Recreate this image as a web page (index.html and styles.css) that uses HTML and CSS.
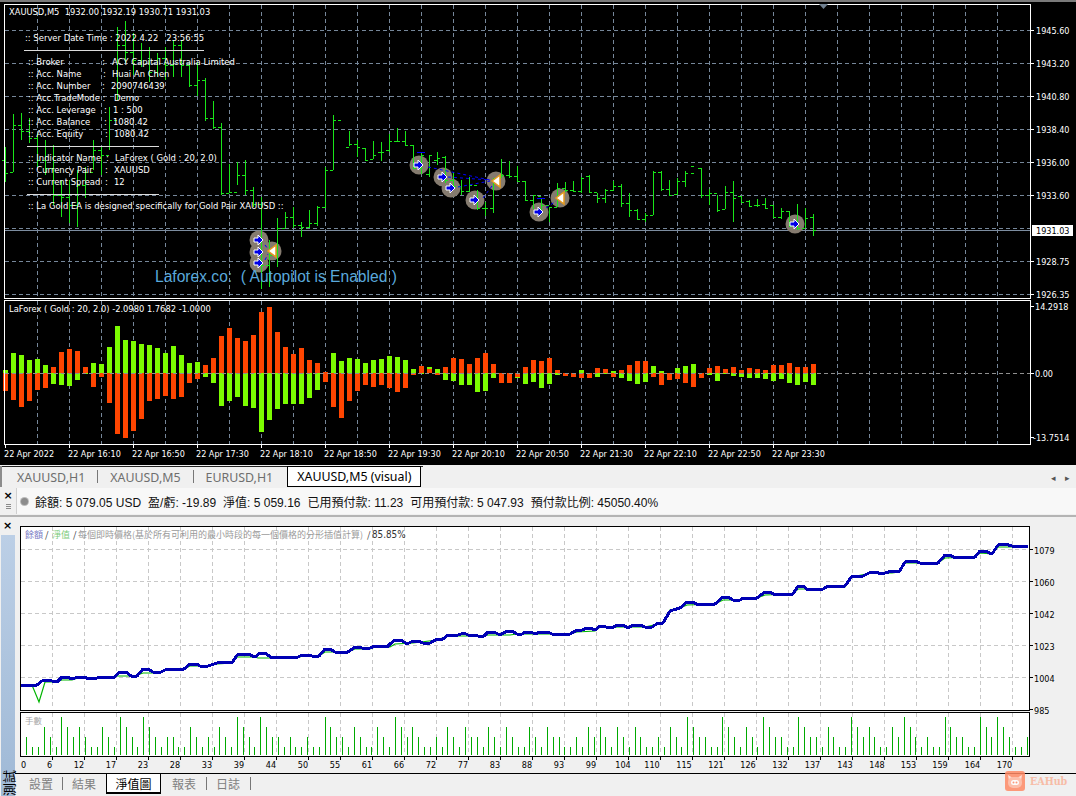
FILE: index.html
```html
<!DOCTYPE html>
<html lang="zh-Hant">
<head>
<meta charset="utf-8">
<title>MetaTrader strategy tester</title>
<link rel="stylesheet" href="styles.css">
</head>
<body>
<div class="app">
  <div class="chart-window">
    <svg class="chart-svg" width="1076" height="465" viewBox="0 0 1076 465">
      <defs>
        <g id="buy">
          <path class="arrow-blue" d="M-5-2h4v-3l5 5-5 5v-3h-4z"/>
        </g>
        <g id="sell">
          <path class="arrow-sell" d="M4-6L-4 0 4 6z"/>
        </g>
      </defs>
      <!-- grid -->
      <path class="grid-dark" d="M37 5V298M69 5V298M101 5V298M133 5V298M165 5V298M197 5V298M229 5V298M261 5V298M293 5V298M325 5V298M357 5V298M389 5V298M421 5V298M453 5V298M485 5V298M517 5V298M549 5V298M581 5V298M613 5V298M645 5V298M677 5V298M709 5V298M741 5V298M773 5V298M805 5V298M837 5V298M869 5V298M901 5V298M933 5V298M965 5V298M997 5V298"/>
      <path class="grid-dark" d="M5 30H1030M5 63H1030M5 96H1030M5 129H1030M5 162H1030M5 195H1030M5 228H1030M5 261H1030M5 294H1030"/>
      <path class="grid-dark" d="M37 301V444M69 301V444M101 301V444M133 301V444M165 301V444M197 301V444M229 301V444M261 301V444M293 301V444M325 301V444M357 301V444M389 301V444M421 301V444M453 301V444M485 301V444M517 301V444M549 301V444M581 301V444M613 301V444M645 301V444M677 301V444M709 301V444M741 301V444M773 301V444M805 301V444M837 301V444M869 301V444M901 301V444M933 301V444M965 301V444M997 301V444"/>
      <path class="price-line" d="M5 230H1030"/>

      <!-- trade circles -->
      <g class="trade-discs">
        <circle cx="259" cy="240" r="9.5"/><circle cx="259" cy="252" r="9.5"/><circle cx="259" cy="263" r="9.5"/><circle cx="272" cy="251" r="9.5"/>
        <circle cx="419" cy="165" r="9.5"/><circle cx="443" cy="177" r="9.5"/><circle cx="451" cy="188" r="9.5"/><circle cx="475" cy="200" r="9.5"/><circle cx="496" cy="181" r="9.5"/>
        <circle cx="539" cy="212" r="9.5"/><circle cx="560" cy="198" r="9.5"/><circle cx="795" cy="224" r="9.5"/>
      </g>

      <!-- price bars -->
      <path class="bars" d="M5 147V182M2 160h3M5 173h3M13 114V172M10 172h3M13 125h3M21 113V140M18 125h3M21 131h3M29 118V143M26 131h3M29 138h3M37 133V167M34 138h3M37 160h3M45 140V175M42 160h3M45 168h3M53 145V205M50 168h3M53 195h3M61 180V217M58 195h3M61 197h3M69 180V223M66 197h3M69 205h3M77 170V227M74 205h3M77 185h3M85 167V198M82 185h3M85 172h3M93 140V170M90 172h3M93 150h3M101 147V175M98 150h3M101 155h3M109 107V150M106 155h3M109 120h3M117 27V100M114 120h3M117 45h3M125 21V63M122 45h3M125 52h3M133 33V75M130 52h3M133 60h3M141 43V67M138 60h3M141 50h3M149 47V82M146 50h3M149 72h3M157 53V77M154 72h3M157 58h3M165 47V80M162 58h3M165 65h3M173 40V77M170 65h3M173 45h3M181 40V77M178 45h3M181 65h3M189 63V87M186 65h3M189 85h3M197 62V96M194 85h3M197 80h3M205 78V121M202 80h3M205 118h3M213 101V129M210 118h3M213 127h3M221 123V195M218 127h3M221 193h3M229 164V193M226 193h3M229 192h3M237 162V185M234 192h3M237 175h3M245 160V195M242 175h3M245 190h3M253 187V207M250 190h3M253 204h3M261 197V289M258 204h3M261 265h3M269 240V287M266 265h3M269 255h3M277 218V267M274 255h3M277 228h3M285 212V228M282 228h3M285 217h3M293 207V228M290 217h3M293 225h3M301 222V237M298 225h3M301 227h3M309 210V228M306 227h3M309 223h3M317 206V226M314 223h3M317 207h3M325 167V208M322 207h3M325 170h3M333 115V170M330 170h3M333 120h3M338 120h3M349 131V146M346 147h3M349 144h3M357 140V157M354 144h3M357 147h3M365 148V160M362 148h3M365 160h3M373 141V159M370 159h3M373 155h3M381 142V161M378 152h3M381 152h3M389 134V152M386 150h3M389 141h3M397 128V142M394 141h3M397 141h3M405 131V146M402 141h3M405 145h3M413 145V168M410 145h3M413 168h3M421 153V174M418 168h3M421 155h3M429 155V177M426 174h3M429 155h3M437 152V165M434 160h3M437 158h3M445 156V183M442 157h3M445 180h3M453 172V188M450 180h3M453 186h3M461 180V195M458 186h3M461 191h3M469 177V192M466 191h3M469 185h3M477 190V210M474 185h3M477 208h3M485 202V216M482 208h3M485 208h3M493 180V213M490 208h3M493 178h3M501 159V178M498 178h3M501 175h3M509 161V178M506 175h3M509 176h3M517 166V182M514 176h3M517 181h3M525 181V200M522 181h3M525 200h3M533 195V209M530 200h3M533 195h3M541 198V213M538 196h3M541 205h3M549 207V222M546 205h3M549 207h3M557 183V207M554 207h3M557 188h3M565 182V192M562 188h3M565 190h3M573 181V192M570 190h3M573 191h3M581 177V193M578 191h3M581 178h3M589 175V193M586 176h3M589 192h3M597 193V203M594 192h3M597 198h3M605 189V203M602 198h3M605 190h3M613 181V191M610 190h3M613 186h3M621 184V207M618 186h3M621 203h3M629 193V217M626 203h3M629 210h3M637 209V220M634 210h3M637 219h3M645 213V222M642 219h3M645 215h3M653 171V215M650 215h3M653 172h3M661 171V191M658 172h3M661 189h3M669 180V195M666 189h3M669 195h3M677 178V195M674 194h3M677 181h3M685 171V187M682 181h3M685 173h3M691 166h3M691 173h3M701 168V198M698 168h3M701 195h3M709 189V205M706 195h3M709 193h3M717 195V212M714 193h3M717 210h3M725 186V209M722 209h3M725 192h3M733 181V222M730 192h3M733 198h3M741 196V203M738 196h3M741 202h3M749 200V207M746 201h3M749 206h3M757 199V207M754 205h3M757 205h3M765 198V209M762 204h3M765 208h3M773 205V217M770 205h3M773 217h3M781 208V219M778 217h3M781 211h3M789 211V227M786 211h3M789 226h3M797 204V230M794 226h3M797 228h3M805 208V228M802 228h3M805 218h3M813 214V236M810 217h3M813 230h3"/>

      <!-- trade links -->
      <path class="trade-link" d="M428 167L490 180M448 177L490 180M458 187L490 181M483 198L492 186M546 208L556 201M265 245L268 249M265 260L268 254"/>
      <path class="trade-mark" d="M417 152h8M537 198h8"/>
      <!-- trade arrows -->
      <use href="#buy" x="259" y="240"/><use href="#buy" x="259" y="252"/><use href="#buy" x="259" y="263"/><use href="#sell" x="272" y="251"/>
      <use href="#buy" x="419" y="165"/><use href="#buy" x="443" y="177"/><use href="#buy" x="451" y="188"/><use href="#buy" x="475" y="200"/><use href="#sell" x="496" y="181"/>
      <use href="#buy" x="539" y="212"/><use href="#sell" x="560" y="198"/><use href="#buy" x="795" y="224"/>

      <!-- oscillator histogram -->
      <g transform="translate(.5 0)">
        <path class="hist-green" d="M5 373V370M13 373V353M21 373V355M29 373V360M37 373V359M45 373V365M53 373V384M61 373V385M69 373V386M77 373V380M85 373V374M93 373V363M101 373V364M109 373V347M117 373V326M125 373V340M133 373V341M141 373V344M149 373V345M157 373V348M165 373V353M173 373V346M181 373V355M189 373V363M197 373V362M205 373V377M213 373V383M221 373V406M229 373V401M237 373V397M245 373V406M253 373V408M261 373V432M269 373V420M277 373V409M285 373V404M293 373V404M301 373V404M309 373V398M317 373V390M333 373V353M341 373V361M349 373V358M357 373V359M365 373V363M373 373V360M381 373V359M389 373V356M397 373V357M405 373V360M413 373V369M421 373V374M429 373V367M437 373V369M445 373V380M453 373V381M461 373V385M469 373V385M477 373V392M485 373V391M493 373V378M517 373V378M525 373V384M533 373V382M541 373V388M549 373V384M557 373V375M581 373V370M597 373V377M605 373V374M613 373V371M621 373V378M629 373V381M637 373V384M645 373V382M653 373V366M661 373V371M677 373V368M685 373V366M693 373V364M709 373V375M717 373V381M725 373V374M733 373V376M741 373V377M749 373V378M757 373V378M765 373V379M773 373V381M781 373V379M789 373V383M797 373V385M805 373V382M813 373V385"/>
        <path class="hist-red" d="M5 373V391M13 373V400M21 373V407M29 373V401M37 373V390M45 373V388M53 373V367M61 373V352M69 373V349M77 373V351M85 373V367M93 373V387M101 373V377M109 373V403M117 373V434M125 373V438M133 373V431M141 373V419M149 373V401M157 373V399M165 373V396M173 373V399M181 373V397M189 373V383M197 373V379M205 373V365M213 373V358M221 373V336M229 373V328M237 373V338M245 373V341M253 373V335M261 373V312M269 373V307M277 373V332M285 373V347M293 373V354M301 373V348M309 373V360M317 373V363M325 372V382M333 373V407M341 373V418M349 373V401M357 373V391M365 373V385M373 373V387M381 373V385M389 373V388M397 373V392M405 373V388M413 373V375M421 373V366M429 373V369M437 373V375M445 373V367M453 373V358M461 373V359M469 373V364M477 373V358M485 373V353M493 373V364M501 373V383M509 373V383M517 373V377M525 373V367M533 373V360M541 373V361M549 373V358M557 373V370M565 373V376M573 373V377M581 373V378M589 373V378M597 373V368M605 373V369M613 373V377M621 373V370M629 373V365M637 373V361M645 373V361M653 373V377M661 373V385M669 373V380M677 373V379M685 373V383M693 373V387M701 373V378M709 373V368M717 373V366M725 373V369M733 373V367M741 373V370M749 373V368M757 373V369M765 373V370M773 373V365M781 373V365M789 373V363M797 373V367M805 373V367M813 373V364"/>
      </g>
      <path class="zero-line" d="M5 373H1030"/>

      <!-- frames -->
      <path class="frame" d="M4.5 4.5H1030.5V298.5H4.5ZM4.5 300.5H1030.5V444.5H4.5Z"/>
      <path class="frame" d="M1031 30h3M1031 63h3M1031 96h3M1031 129h3M1031 162h3M1031 195h3M1031 261h3M1031 294h3M1031 306h3M1031 373h3M1031 437h3"/>
      <path class="frame" d="M5 445v3M69 445v3M133 445v3M197 445v3M261 445v3M325 445v3M389 445v3M453 445v3M517 445v3M581 445v3M645 445v3M709 445v3M773 445v3"/>
      <path class="peg" d="M819 4h9l-4.500 5z"/>

      <!-- panel text -->
      <text class="h" x="9" y="15">XAUUSD,M5  1932.00 1932.19 1930.71 1931.03</text>
      <text class="p" x="25" y="41">:: Server Date Time : 2022.4.22   23:56:55</text>
      <path class="rule" d="M24 50H204M27 146H159M27 194H159"/>
      <text class="p" x="28" y="65">:: Broker</text><text class="p" x="102" y="65">:</text><text class="p" x="112" y="65">ACY Capital Australia Limited</text>
      <text class="p" x="28" y="77">:: Acc. Name</text><text class="p" x="103" y="77">:</text><text class="p" x="112" y="77">Huai An Chen</text>
      <text class="p" x="28" y="89">:: Acc. Number</text><text class="p" x="102" y="89">:</text><text class="p" x="111" y="89">2090746439</text>
      <text class="p" x="28" y="101">:: Acc.TradeMode :</text><text class="p" x="114" y="101">Demo</text>
      <text class="p" x="28" y="113">:: Acc. Leverage</text><text class="p" x="104" y="113">:</text><text class="p" x="113" y="113">1 : 500</text>
      <text class="p" x="28" y="125">:: Acc. Balance</text><text class="p" x="104" y="125">:</text><text class="p" x="113" y="125">1080.42</text>
      <text class="p" x="28" y="137">:: Acc. Equity</text><text class="p" x="105" y="137">:</text><text class="p" x="114" y="137">1080.42</text>
      <text class="p" x="28" y="161">:: Indicator Name</text><text class="p" x="106" y="161">:</text><text class="p" x="115" y="161">LaForex ( Gold : 20, 2.0)</text>
      <text class="p" x="28" y="173">:: Currency Pair</text><text class="p" x="105" y="173">:</text><text class="p" x="114" y="173">XAUUSD</text>
      <text class="p" x="28" y="185">:: Current Spread</text><text class="p" x="105" y="185">:</text><text class="p" x="114" y="185">12</text>
      <text class="p" x="28" y="209">:: La Gold EA is designed specifically for Gold Pair XAUUSD ::</text>
      <text class="autopilot" x="155" y="282">Laforex.co:  ( Autopilot is Enabled )</text>
      <text class="h" x="9" y="312">LaForex ( Gold : 20, 2.0) -2.0980 1.7682 -1.0000</text>

      <!-- price scale -->
      <text class="t" x="1036" y="34">1945.60</text><text class="t" x="1036" y="67">1943.20</text><text class="t" x="1036" y="100">1940.80</text><text class="t" x="1036" y="133">1938.40</text><text class="t" x="1036" y="166">1936.00</text><text class="t" x="1036" y="199">1933.60</text>
      <rect class="price-box" x="1032" y="225" width="41" height="11"/><text class="t-dark" x="1036" y="234">1931.03</text>
      <text class="t" x="1036" y="265">1928.75</text><text class="t" x="1036" y="298">1926.35</text>
      <text class="t" x="1035" y="310">14.2918</text><text class="t" x="1035" y="377">0.00</text><text class="t" x="1033" y="441">-13.7514</text>

      <!-- time scale -->
      <text class="t" x="4" y="457">22 Apr 2022</text><text class="t" x="68" y="457">22 Apr 16:10</text><text class="t" x="132" y="457">22 Apr 16:50</text><text class="t" x="196" y="457">22 Apr 17:30</text><text class="t" x="260" y="457">22 Apr 18:10</text><text class="t" x="324" y="457">22 Apr 18:50</text><text class="t" x="388" y="457">22 Apr 19:30</text><text class="t" x="452" y="457">22 Apr 20:10</text><text class="t" x="516" y="457">22 Apr 20:50</text><text class="t" x="580" y="457">22 Apr 21:30</text><text class="t" x="644" y="457">22 Apr 22:10</text><text class="t" x="708" y="457">22 Apr 22:50</text><text class="t" x="772" y="457">22 Apr 23:30</text>
    </svg>
  </div>

  <div class="tabbar">
    <div class="tab tab-a">XAUUSD,H1</div><i class="tab-sep"></i>
    <div class="tab tab-b">XAUUSD,M5</div><i class="tab-sep"></i>
    <div class="tab tab-c">EURUSD,H1</div>
    <div class="tab tab-active">XAUUSD,M5 (visual)</div>
    <div class="tab-scroll"><span>&#9666;</span><span>&#9656;</span></div>
  </div>

  <div class="status-row">
    <div class="grip"><b>&times;</b><i></i></div>
    <div class="status">
      <span class="dot"></span>
      <span>餘額: 5 079.05 USD</span>
      <span>盈/虧: -19.89</span>
      <span>淨值: 5 059.16</span>
      <span>已用預付款: 11.23</span>
      <span>可用預付款: 5 047.93</span>
      <span>預付款比例: 45050.40%</span>
    </div>
  </div>

  <div class="tester">
    <div class="side">
      <b class="side-close">&times;</b>
      <div class="side-tab"><span>測試</span></div>
    </div>
    <div class="tester-main">
      <svg class="equity-svg" width="1061" height="256" viewBox="15 517 1061 256">
        <rect class="paper" x="20" y="526" width="1009" height="184"/>
        <rect class="paper" x="20" y="712" width="1009" height="44"/>
        <path class="grid-light" d="M52 527V709M84 527V709M116 527V709M148 527V709M180 527V709M212 527V709M244 527V709M276 527V709M308 527V709M340 527V709M372 527V709M404 527V709M436 527V709M468 527V709M500 527V709M532 527V709M564 527V709M596 527V709M628 527V709M660 527V709M692 527V709M724 527V709M756 527V709M788 527V709M820 527V709M852 527V709M884 527V709M916 527V709M948 527V709M980 527V709M1012 527V709"/>
        <path class="grid-light" d="M52 713V755M84 713V755M116 713V755M148 713V755M180 713V755M212 713V755M244 713V755M276 713V755M308 713V755M340 713V755M372 713V755M404 713V755M436 713V755M468 713V755M500 713V755M532 713V755M564 713V755M596 713V755M628 713V755M660 713V755M692 713V755M724 713V755M756 713V755M788 713V755M820 713V755M852 713V755M884 713V755M916 713V755M948 713V755M980 713V755M1012 713V755"/>
        <path class="grid-light" d="M21 549H1029M21 581H1029M21 613H1029M21 645H1029M21 677H1029"/>

        <polyline class="eq-green" points="21,685 32,685 39,702 45,682 56,682 62,680 72,680 78,678 113,678 117,676 135,676 143,673 153,673 161,672 167,669 184,669 190,666 208,666 217,664 232,663 237,657 255,657 258,658 272,658 300,657 302,656 319,656 325,652 348,652 355,649 370,649 375,647 390,647 395,644 413,643 437,640 448,636 484,636 488,635 510,635 517,634 570,634 577,632 595,631 600,627 612,628 617,627 645,627 658,624 663,623 670,610 680,608 687,605 715,604 723,600 740,600 743,599 757,598 765,595 793,594 798,589 823,589 828,587 845,587 852,577 871,573 892,573 899,572 905,563 938,563 945,558 975,557 980,553 992,554 998,547 1028,547"/>
        <polyline class="eq-blue" points="21,685 37,685 42,681 45,680 52,681 57,682 62,677 67,677 72,679 78,677 83,677 90,679 97,678 100,677 113,678 120,672 126,672 131,676 137,676 143,669 148,669 153,672 161,672 167,669 184,669 190,664 197,664 200,666 208,666 217,663 222,662 232,663 237,655 243,654 248,654 255,657 260,653 265,653 272,658 298,657 302,655 310,655 312,656 319,656 325,649 330,649 335,652 348,652 355,647 360,647 364,649 370,648 375,646 380,646 387,647 390,644 395,640 401,640 407,644 413,641 418,641 423,643 430,643 437,639 443,639 448,635 458,635 464,633 468,635 475,635 478,636 484,636 488,632 494,632 500,635 507,631 512,631 517,634 522,634 525,632 531,632 535,634 540,632 548,632 552,634 570,634 577,630 582,630 587,628 590,628 595,630 600,626 612,628 617,625 623,625 628,628 633,625 640,625 645,627 652,627 658,623 663,623 670,611 680,608 687,602 693,602 698,605 715,604 723,597 728,597 733,600 740,600 743,598 757,598 765,592 770,592 775,595 793,594 798,586 804,586 807,590 823,589 828,586 845,586 852,576 863,576 871,572 875,572 882,574 892,571 899,572 905,562 915,561 920,563 938,563 945,555 950,555 955,558 975,557 980,551 985,551 992,554 998,545 1005,544 1012,546 1022,546 1028,547"/>

        <path class="volume" d="M26 737V755M32 747V755M38 747V755M44 727V755M50 737V755M56 747V755M61 717V755M67 727V755M73 737V755M79 727V755M85 737V755M91 747V755M97 747V755M102 727V755M108 737V755M114 747V755M120 717V755M126 727V755M132 737V755M137 747V755M143 717V755M149 727V755M155 737V755M161 747V755M167 737V755M173 737V755M178 747V755M184 747V755M190 727V755M196 737V755M202 747V755M208 737V755M214 747V755M219 727V755M225 737V755M231 747V755M237 717V755M243 727V755M249 737V755M254 747V755M260 717V755M266 727V755M272 737V755M278 737V755M284 747V755M290 737V755M295 747V755M301 747V755M307 737V755M313 747V755M319 747V755M325 717V755M330 727V755M336 737V755M342 737V755M348 747V755M354 727V755M360 737V755M366 747V755M371 747V755M377 727V755M383 737V755M389 747V755M395 717V755M401 727V755M407 737V755M412 727V755M418 737V755M424 747V755M430 747V755M436 737V755M442 747V755M447 727V755M453 737V755M459 747V755M465 727V755M471 737V755M477 737V755M483 747V755M488 727V755M494 737V755M500 747V755M506 727V755M512 737V755M518 747V755M524 747V755M529 727V755M535 737V755M541 747V755M547 727V755M553 737V755M559 737V755M564 747V755M570 747V755M576 737V755M582 747V755M588 727V755M594 737V755M600 727V755M605 737V755M611 747V755M617 727V755M623 737V755M629 747V755M635 727V755M640 737V755M646 747V755M652 747V755M658 737V755M664 747V755M670 727V755M676 737V755M681 747V755M687 717V755M693 727V755M699 737V755M705 737V755M711 747V755M717 747V755M722 717V755M728 727V755M734 737V755M740 747V755M746 727V755M752 737V755M757 747V755M763 717V755M769 727V755M775 737V755M781 737V755M787 747V755M793 747V755M798 717V755M804 727V755M810 737V755M816 737V755M822 747V755M828 727V755M833 737V755M839 747V755M845 747V755M851 717V755M857 727V755M863 737V755M869 727V755M874 737V755M880 747V755M886 747V755M892 727V755M898 737V755M904 717V755M910 727V755M915 737V755M921 747V755M927 737V755M933 747V755M939 747V755M945 717V755M950 727V755M956 737V755M962 737V755M968 747V755M974 747V755M980 717V755M986 727V755M991 737V755M997 717V755M1003 727V755M1009 737V755M1015 747V755M1021 747V755M1027 737V755"/>

        <path class="ink" d="M20.500 526.500H1029.500V710.500H20.500ZM20.500 712.500H1029.500V756.500H20.500Z"/>
        <path class="ink" d="M1030 549h3M1030 581h3M1030 613h3M1030 645h3M1030 677h3M1030 709h3M52 757v3M84 757v3M116 757v3M148 757v3M180 757v3M212 757v3M244 757v3M276 757v3M308 757v3M340 757v3M372 757v3M404 757v3M436 757v3M468 757v3M500 757v3M532 757v3M564 757v3M596 757v3M628 757v3M660 757v3M692 757v3M724 757v3M756 757v3M788 757v3M820 757v3M852 757v3M884 757v3M916 757v3M948 757v3M980 757v3M1012 757v3"/>

        <text class="legend" y="538"><tspan class="l-blue" x="25">餘額</tspan><tspan x="45">/</tspan><tspan class="l-green" x="52">淨值</tspan><tspan x="73">/</tspan><tspan class="l-gray" x="78">每個即時價格(基於所有可利用的最小時段的每一個價格的分形插值計算)</tspan><tspan x="367">/</tspan><tspan class="l-pct" x="372">85.85%</tspan></text>
        <text class="lots" x="25" y="724">手數</text>

        <text class="a" x="1034" y="554">1079</text><text class="a" x="1034" y="586">1060</text><text class="a" x="1034" y="618">1042</text><text class="a" x="1034" y="650">1023</text><text class="a" x="1034" y="682">1004</text><text class="a" x="1034" y="714">985</text>

        <g class="a-mid">
          <text x="23.500" y="768">0</text><text x="49.500" y="768">6</text><text x="79" y="768">12</text><text x="111" y="768">17</text><text x="143" y="768">23</text><text x="175" y="768">28</text><text x="207" y="768">33</text><text x="239" y="768">39</text><text x="271" y="768">44</text><text x="303" y="768">50</text><text x="335" y="768">55</text><text x="367" y="768">61</text><text x="399" y="768">66</text><text x="431" y="768">72</text><text x="463" y="768">77</text><text x="495" y="768">83</text><text x="527" y="768">88</text><text x="559" y="768">93</text><text x="591" y="768">99</text><text x="623" y="768">104</text><text x="652" y="768">110</text><text x="684" y="768">115</text><text x="716" y="768">121</text><text x="748" y="768">126</text><text x="780" y="768">132</text><text x="812.500" y="768">137</text><text x="845" y="768">143</text><text x="877" y="768">148</text><text x="908.500" y="768">153</text><text x="940" y="768">159</text><text x="972.500" y="768">164</text><text x="1004.500" y="768">170</text>
        </g>
      </svg>
      <div class="bottom-tabs">
        <div class="btab btab-first">設置</div><i class="btab-sep"></i>
        <div class="btab">結果</div>
        <div class="btab btab-active">淨值圖</div>
        <div class="btab btab-after">報表</div><i class="btab-sep"></i>
        <div class="btab">日誌</div><i class="btab-sep"></i>
      </div>
    </div>
  </div>

  <div class="watermark">
    <svg width="20" height="20" viewBox="0 0 20 20">
      <rect class="wm-bg" width="20" height="20" rx="3"/>
      <path class="wm-ear" d="M3 4l5 3-4 3zM17 4l-5 3 4 3z"/>
      <rect class="wm-face" x="3" y="6" width="14" height="11" rx="5"/>
      <rect class="wm-nose" x="6" y="9" width="8" height="5" rx="2.500"/>
      <circle class="wm-bg" cx="8.500" cy="11.500" r="1"/><circle class="wm-bg" cx="11.500" cy="11.500" r="1"/>
    </svg>
    <span>EAHub</span>
  </div>
</div>
</body>
</html>
```

FILE: styles.css
```css
* { box-sizing: border-box; }
html, body { margin: 0; padding: 0; background: #f0f0f0; }
body { font-family: "DejaVu Sans", "Noto Sans CJK TC", sans-serif; }

.app {
  position: relative;
  width: 1076px;
  height: 796px;
  overflow: hidden;
  display: flex;
  flex-direction: column;
}

/* ---------- terminal chart ---------- */
.chart-window {
  height: 465px;
  flex: none;
  overflow: hidden;
  background: #000;
  border-top: 2px solid #7a7a7a;
}
.chart-svg { display: block; margin-top: -2px; }

.grid-dark {
  fill: none;
  stroke: #76879a;
  stroke-width: 1;
  stroke-dasharray: 4 3;
  shape-rendering: crispEdges;
}
.price-line { stroke: #7d8da0; stroke-width: 1; shape-rendering: crispEdges; }
.zero-line {
  stroke: #8f8f8f;
  stroke-width: 1;
  stroke-dasharray: 4 3;
  shape-rendering: crispEdges;
}
.trade-discs circle { fill: #857b6f; }
.bars { fill: none; stroke: #19e619; stroke-width: 1; shape-rendering: crispEdges; }
.trade-link { fill: none; stroke: #0000ff; stroke-width: 1; stroke-dasharray: 3 3; }
.trade-mark { fill: none; stroke: #0000ff; stroke-width: 1; shape-rendering: crispEdges; }
.arrow-blue { fill: #0000e6; stroke: #fff; stroke-width: 1; }
.arrow-sell { fill: #fff; stroke: #e69a1e; stroke-width: 1.500; }
.hist-green { fill: none; stroke: #7cfc00; stroke-width: 5; shape-rendering: crispEdges; }
.hist-red { fill: none; stroke: #ff4500; stroke-width: 5; shape-rendering: crispEdges; }
.frame { fill: none; stroke: #fff; stroke-width: 1; shape-rendering: crispEdges; }
.rule { fill: none; stroke: #dcdcdc; stroke-width: 1; shape-rendering: crispEdges; }
.peg { fill: #708090; }
.price-box { fill: #fff; }

.t, .t-dark, .p, .h {
  font-family: "DejaVu Sans Condensed", "DejaVu Sans", sans-serif;
  font-stretch: condensed;
  font-size: 9px;
  white-space: pre;
}
.t, .p, .h { fill: #fff; }
.t-dark { fill: #000; }
.p { font-size: 9.400px; }
.h { font-size: 9.250px; }
.autopilot {
  font-family: "Liberation Sans", sans-serif;
  font-size: 15.600px;
  fill: #5aa9dc;
  white-space: pre;
}

/* ---------- chart tabs ---------- */
.tabbar {
  height: 21px;
  margin-top: 1px;
  flex: none;
  display: flex;
  align-items: stretch;
  background: linear-gradient(#222, #222) 0 0 / 421px 1px no-repeat, #f0f0f0;
  border-left: 2px solid #8c8c8c;
  padding-top: 1px;
  font: 12.400px "Noto Sans", sans-serif;
  color: #6e6e6e;
}
.tab {
  display: flex;
  align-items: center;
}
.tab-a { padding: 0 12px 0 15px; }
.tab-b { padding: 0 12px; }
.tab-c { padding: 0 14px 0 12px; }
.tab-sep {
  width: 1px;
  height: 13px;
  background: #777;
  margin-top: 3px;
}
.tab-active {
  width: 134px;
  padding: 0 0 0 9px;
  margin-top: -1px;
  color: #000;
  background: #fff;
  border: 1px solid #000;
}
.tab-scroll {
  margin-left: auto;
  padding-right: 6px;
  display: flex;
  align-items: center;
  gap: 9px;
  font-size: 9px;
  color: #555;
}

/* ---------- account status ---------- */
.status-row {
  height: 30px;
  flex: none;
  display: flex;
  padding-top: 1px;
  background: #f0f0f0;
  border-bottom: 2px solid #b4b4b4;
}
.grip {
  width: 16px;
  display: flex;
  flex-direction: column;
  align-items: center;
  font-size: 11px;
  line-height: 10px;
  padding-top: 3px;
}
.grip i {
  display: block;
  width: 5px;
  height: 6px;
  margin-top: 3px;
  background: repeating-linear-gradient(#8a8a8a 0 1px, transparent 1px 2px);
}
.status {
  flex: 1;
  height: 26px;
  display: flex;
  align-items: center;
  gap: 7px;
  padding-left: 4px;
  background: #f8f8f8;
  border-left: 1px solid #d0d0d0;
  font: 12px "Liberation Sans", "Noto Sans CJK TC", sans-serif;
  color: #111;
}
.dot {
  width: 7px;
  height: 7px;
  border-radius: 50%;
  background: #8c8c8c;
  box-shadow: 0 0 0 1px #bbb;
}

/* ---------- strategy tester ---------- */
.tester { flex: 1; min-height: 0; display: flex; }
.side {
  width: 15px;
  flex: none;
  display: flex;
  flex-direction: column;
  align-items: stretch;
  padding-top: 3px;
}
.side-close {
  height: 15px;
  font-size: 11px;
  line-height: 12px;
  text-align: center;
}
.side-tab {
  flex: 1;
  display: flex;
  align-items: flex-end;
  justify-content: center;
  margin-left: 1px;
  background: linear-gradient(#bccfe6, #9fb9d6);
}
.side-tab span {
  writing-mode: vertical-rl;
  text-orientation: sideways;
  transform: rotate(180deg);
  font: 13px/13px "Noto Sans CJK TC", sans-serif;
  color: #000;
}
.tester-main {
  flex: 1;
  min-width: 0;
  display: flex;
  flex-direction: column;
}
.equity-svg { display: block; flex: none; }
.paper { fill: #fff; }
.grid-light {
  fill: none;
  stroke: #c8c8c8;
  stroke-width: 1;
  stroke-dasharray: 4 3;
  shape-rendering: crispEdges;
}
.eq-green { fill: none; stroke: #00b400; stroke-width: 1.200; }
.eq-blue { fill: none; stroke: #0000b4; stroke-width: 3; stroke-linejoin: round; shape-rendering: crispEdges; }
.volume { fill: none; stroke: #00aa00; stroke-width: 1; shape-rendering: crispEdges; }
.ink { fill: none; stroke: #000; stroke-width: 1; shape-rendering: crispEdges; }

.legend {
  font-family: "Noto Sans CJK TC", sans-serif;
  font-size: 9px;
  fill: #333;
  white-space: pre;
}
.l-blue { fill: #7a7ac4; }
.l-green { fill: #7acb7a; }
.l-gray { fill: #9a9a9a; }
.l-pct {
  font-family: "DejaVu Sans Condensed", "DejaVu Sans", sans-serif;
  font-stretch: condensed;
  font-size: 9.800px;
}
.lots {
  font-family: "Noto Sans CJK TC", sans-serif;
  font-size: 8.500px;
  fill: #a8a8a8;
}
.a, .a-mid text {
  font-family: "DejaVu Sans Condensed", "DejaVu Sans", sans-serif;
  font-stretch: condensed;
  font-size: 9px;
  fill: #000;
}
.a-mid text { text-anchor: middle; }

.bottom-tabs {
  flex: 1;
  display: flex;
  align-items: stretch;
  background: #f0f0f0;
  border-top: 1px solid #000;
  font: 12px "Noto Sans CJK TC", sans-serif;
  color: #808080;
}
.btab {
  display: flex;
  align-items: center;
  padding: 0 10px 0 9px;
  height: 19px;
}
.btab-first { padding-left: 14px; padding-right: 9px; }
.btab-after { padding-left: 11px; }
.btab-sep {
  width: 1px;
  height: 13px;
  margin-top: 3px;
  background: #777;
}
.btab-active {
  width: 55px;
  justify-content: center;
  padding: 0;
  color: #000;
  background: #fff;
  border: 1px solid #000;
  border-top: 0;
  border-bottom-width: 2px;
  height: 20px;
}

/* ---------- watermark ---------- */
.watermark {
  position: absolute;
  left: 1005px;
  top: 771px;
  display: flex;
  align-items: center;
  gap: 5px;
  opacity: .85;
}
.watermark svg { display: block; }
.wm-bg { fill: #ff8a66; }
.wm-ear { fill: #fff; opacity: .7; }
.wm-face { fill: #ffb79f; }
.wm-nose { fill: #fff; }
.watermark span {
  font: bold 10.600px "DejaVu Serif Condensed", "DejaVu Serif", serif;
  font-stretch: condensed;
  color: #f9b49a;
}
```
